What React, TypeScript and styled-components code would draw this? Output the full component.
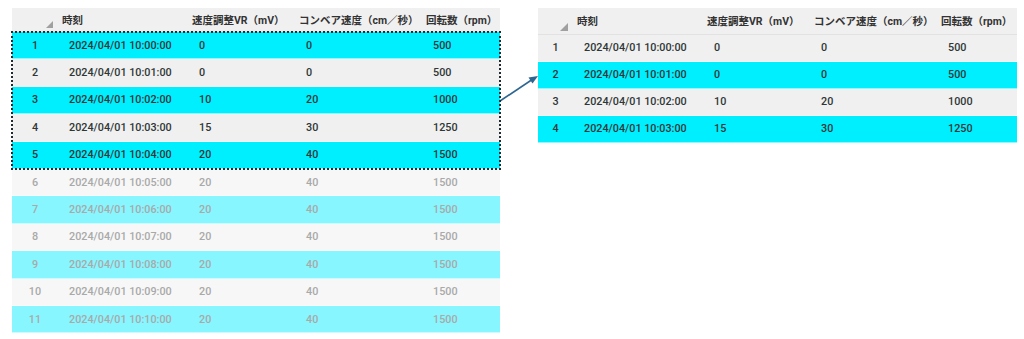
import React from "react";
import styled, { createGlobalStyle, css } from "styled-components";

const Global = createGlobalStyle`
  html, body { margin: 0; padding: 0; background: #ffffff; }
  body { font-family: Roboto, "Noto Sans CJK JP", sans-serif; }
`;

const Page = styled.div`
  display: flex;
  align-items: flex-start;
  padding: 8px 0 0 12px;
  width: 1024px;
  height: 339px;
  box-sizing: border-box;
`;

const Table = styled.div<{ $width: number }>`
  width: ${(p) => p.$width}px;
  display: flex;
  flex-direction: column;
  flex-shrink: 0;
`;

const HeaderRow = styled.div<{ $cols: string; $h: number }>`
  display: grid;
  grid-template-columns: ${(p) => p.$cols};
  height: ${(p) => p.$h}px;
  background: #f0f0f0;
  border-bottom: 1px solid #e2e2e2;
  box-sizing: border-box;
`;

const HeadCell = styled.div`
  display: flex;
  align-items: center;
  padding-left: 4px;
  font-size: 10.5px;
  font-weight: 700;
  color: #333;
  white-space: nowrap;
  font-family: Roboto, "Noto Sans CJK JP", sans-serif;
`;

const CornerCell = styled.div`
  display: flex;
  justify-content: flex-end;
  align-items: flex-end;
  padding: 0 5px 3px 0;
`;

const SortMark = styled.span<{ $size: number }>`
  width: 0;
  height: 0;
  border-style: solid;
  border-width: 0 0 ${(p) => p.$size}px ${(p) => p.$size}px;
  border-color: transparent transparent #a0a0a0 transparent;
`;

const Selection = styled.div`
  outline: 2px dotted #1e2a30;
  outline-offset: -1px;
  position: relative;
  z-index: 1;
`;

const Row = styled.div<{ $cols: string; $h: number; $tone: "cyan" | "gray"; $faded?: boolean }>`
  display: grid;
  grid-template-columns: ${(p) => p.$cols};
  height: ${(p) => p.$h}px;
  box-sizing: border-box;
  border-bottom: 1px solid rgba(255, 255, 255, 0.55);
  ${(p) =>
    p.$faded
      ? css`
          background: ${p.$tone === "cyan" ? "#88f6ff" : "#f7f7f7"};
          color: #a9a9a9;
        `
      : css`
          background: ${p.$tone === "cyan" ? "#00efff" : "#f0f0f0"};
          color: #2f3636;
        `}
`;

const Cell = styled.div<{ $center?: boolean }>`
  display: flex;
  align-items: center;
  justify-content: ${(p) => (p.$center ? "center" : "flex-start")};
  padding-left: ${(p) => (p.$center ? 0 : 11)}px;
  font-size: 10.8px;
  font-weight: 500;
  white-space: nowrap;
`;

const ArrowBox = styled.svg`
  flex-shrink: 0;
  display: block;
`;

type Rec = { n: number; t: string; vr: string; cv: string; rpm: string };

const leftData: Rec[] = [
  { n: 1, t: "2024/04/01 10:00:00", vr: "0", cv: "0", rpm: "500" },
  { n: 2, t: "2024/04/01 10:01:00", vr: "0", cv: "0", rpm: "500" },
  { n: 3, t: "2024/04/01 10:02:00", vr: "10", cv: "20", rpm: "1000" },
  { n: 4, t: "2024/04/01 10:03:00", vr: "15", cv: "30", rpm: "1250" },
  { n: 5, t: "2024/04/01 10:04:00", vr: "20", cv: "40", rpm: "1500" },
  { n: 6, t: "2024/04/01 10:05:00", vr: "20", cv: "40", rpm: "1500" },
  { n: 7, t: "2024/04/01 10:06:00", vr: "20", cv: "40", rpm: "1500" },
  { n: 8, t: "2024/04/01 10:07:00", vr: "20", cv: "40", rpm: "1500" },
  { n: 9, t: "2024/04/01 10:08:00", vr: "20", cv: "40", rpm: "1500" },
  { n: 10, t: "2024/04/01 10:09:00", vr: "20", cv: "40", rpm: "1500" },
  { n: 11, t: "2024/04/01 10:10:00", vr: "20", cv: "40", rpm: "1500" },
];

const rightData: Rec[] = leftData.slice(0, 4);

const headers = ["時刻", "速度調整VR（mV）", "コンベア速度（cm／秒）", "回転数（rpm）"];

const LEFT_COLS = "46px 130px 107px 127px 78px";
const RIGHT_COLS = "35px 130px 107px 127px 80px";

function Header({ cols, h, mark }: { cols: string; h: number; mark: number }) {
  return (
    <HeaderRow $cols={cols} $h={h}>
      <CornerCell>
        <SortMark $size={mark} />
      </CornerCell>
      {headers.map((t) => (
        <HeadCell key={t}>{t}</HeadCell>
      ))}
    </HeaderRow>
  );
}

function DataRow({
  r,
  cols,
  h,
  tone,
  faded,
}: {
  r: Rec;
  cols: string;
  h: number;
  tone: "cyan" | "gray";
  faded?: boolean;
}) {
  return (
    <Row $cols={cols} $h={h} $tone={tone} $faded={faded}>
      <Cell $center>{r.n}</Cell>
      <Cell>{r.t}</Cell>
      <Cell>{r.vr}</Cell>
      <Cell>{r.cv}</Cell>
      <Cell>{r.rpm}</Cell>
    </Row>
  );
}

export default function App() {
  const leftSel = leftData.slice(0, 5);
  const leftRest = leftData.slice(5);
  return (
    <>
      <Global />
      <Page>
        <Table $width={488}>
          <Header cols={LEFT_COLS} h={24} mark={7} />
          <Selection>
            {leftSel.map((r) => (
              <DataRow key={r.n} r={r} cols={LEFT_COLS} h={27.4} tone={r.n % 2 === 1 ? "cyan" : "gray"} />
            ))}
          </Selection>
          {leftRest.map((r) => (
            <DataRow key={r.n} r={r} cols={LEFT_COLS} h={27.4} tone={r.n % 2 === 1 ? "cyan" : "gray"} faded />
          ))}
        </Table>
        <ArrowBox width="38" height="120" viewBox="0 0 38 120">
          <line x1="0" y1="93" x2="33" y2="71" stroke="#2d6690" strokeWidth="1.6" />
          <polygon points="38,68 28.5,69.5 32.5,75.5" fill="#2d6690" />
        </ArrowBox>
        <Table $width={479}>
          <Header cols={RIGHT_COLS} h={26.5} mark={8} />
          {rightData.map((r) => (
            <DataRow key={r.n} r={r} cols={RIGHT_COLS} h={27} tone={r.n % 2 === 0 ? "cyan" : "gray"} />
          ))}
        </Table>
      </Page>
    </>
  );
}
